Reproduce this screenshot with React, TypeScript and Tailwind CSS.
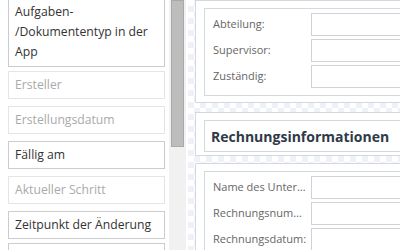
import React from "react";

const fields = [
  { label: "Ersteller", disabled: true, mt: "mt-[4px]" },
  { label: "Erstellungsdatum", disabled: true, mt: "mt-[7px]" },
  { label: "Fällig am", disabled: false, mt: "mt-[7px]" },
  { label: "Aktueller Schritt", disabled: true, mt: "mt-[7px]" },
  { label: "Zeitpunkt der Änderung", disabled: false, mt: "mt-[7px]" },
  { label: "", disabled: false, mt: "mt-[4px]" },
];

function Row({ label }: { label: string }) {
  return (
    <div className="flex items-center h-[23px]">
      <span className="w-[98px] shrink-0 pr-[2px] truncate text-[11px] text-[#666]">{label}</span>
      <div className="flex-1 h-[23px] border border-[#cfd2d6] bg-white" />
    </div>
  );
}

export default function App() {
  return (
    <div
      className="flex h-[250px] w-[400px] overflow-hidden bg-white"
      style={{ fontFamily: '"Open Sans", "Liberation Sans", sans-serif' }}
    >
      {/* Felderliste */}
      <div className="w-[169px] shrink-0 pl-[8px] pr-[4px]">
        <div className="-mt-[2px] flex flex-col">
          <div className="border border-[#c9ccd1] px-[6px] pt-[3px] pb-[4px] text-[12.2px] leading-[20px] text-[#333]">
            Aufgaben-
            <br />
            /Dokumententyp in der
            <br />
            App
          </div>
          {fields.map((f, i) => (
            <div
              key={i}
              className={`${f.mt} h-[28px] border px-[6px] text-[12.2px] leading-[26px] whitespace-nowrap ${
                f.disabled ? "border-[#e4e5e7] text-[#aaa]" : "border-[#c9ccd1] text-[#333]"
              }`}
            >
              {f.label}
            </div>
          ))}
        </div>
      </div>

      {/* Scrollbar */}
      <div className="w-[17px] shrink-0 bg-[#f1f1f1] pl-[2px]">
        <div className="h-[147px] w-[13px] border border-[#a9a9a9] bg-[#bdbdbd]" />
      </div>
      <div className="w-[2px] shrink-0 bg-white" />

      {/* Formular */}
      <div className="flex-1 min-w-0 pl-[7px] bg-[conic-gradient(#eef1f7_25%,#ffffff_0_50%,#eef1f7_0_75%,#ffffff_0)] bg-[length:12px_12px]">
        <div className="w-[260px] flex flex-col">
          <div className="h-[103px] border border-[#d5d8dc] bg-white px-[8px] pt-[7px]">
            <div className="h-[88px] border border-[#d5d8dc] pl-[8px] pt-[4px] flex flex-col gap-[3px]">
              <Row label="Abteilung:" />
              <Row label="Supervisor:" />
              <Row label="Zuständig:" />
            </div>
          </div>

          <div className="mt-[9px] h-[44px] border border-[#d5d8dc] bg-white px-[8px] pt-[7px]">
            <div className="h-[32px] border border-[#d5d8dc] pl-[6px] flex items-center">
              <span className="text-[14px] font-bold text-[#2f3a48] whitespace-nowrap">
                Rechnungsinformationen
              </span>
            </div>
          </div>

          <div className="mt-[7px] border border-[#d5d8dc] bg-white px-[8px] pt-[7px]">
            <div className="h-[120px] border border-[#d5d8dc] pl-[8px] pt-[4px] flex flex-col gap-[3px]">
              <Row label="Name des Unternehmens:" />
              <Row label="Rechnungsnummer:" />
              <Row label="Rechnungsdatum:" />
            </div>
          </div>
        </div>
      </div>
    </div>
  );
}
